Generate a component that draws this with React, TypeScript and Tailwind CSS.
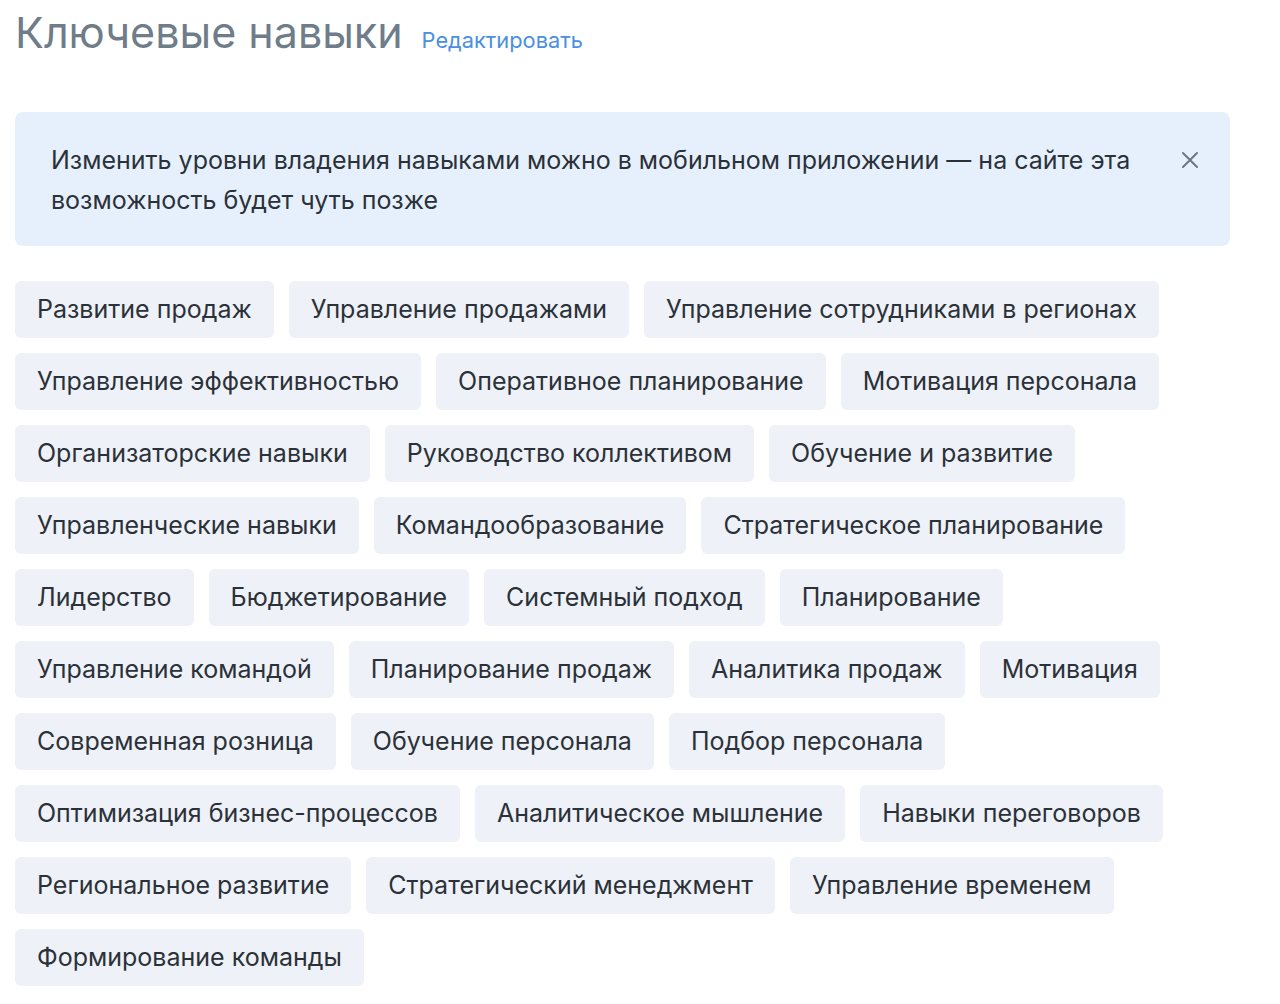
import React from 'react';

const skills = [
  'Развитие продаж',
  'Управление продажами',
  'Управление сотрудниками в регионах',
  'Управление эффективностью',
  'Оперативное планирование',
  'Мотивация персонала',
  'Организаторские навыки',
  'Руководство коллективом',
  'Обучение и развитие',
  'Управленческие навыки',
  'Командообразование',
  'Стратегическое планирование',
  'Лидерство',
  'Бюджетирование',
  'Системный подход',
  'Планирование',
  'Управление командой',
  'Планирование продаж',
  'Аналитика продаж',
  'Мотивация',
  'Современная розница',
  'Обучение персонала',
  'Подбор персонала',
  'Оптимизация бизнес-процессов',
  'Аналитическое мышление',
  'Навыки переговоров',
  'Региональное развитие',
  'Стратегический менеджмент',
  'Управление временем',
  'Формирование команды',
];

export default function App() {
  return (
    <div className="min-h-[1004px] bg-white px-[15px] font-['Inter',sans-serif]">
      <div className="w-[1215px]">
        {/* Header */}
        <div className="flex items-baseline gap-[19px] pt-[6px] h-[112px]">
          <h1 className="text-[43px] leading-[52px] text-[#6f7c89] font-normal">Ключевые навыки</h1>
          <a className="text-[21.8px] text-[#4a8fe2] cursor-pointer">Редактировать</a>
        </div>

        {/* Info banner */}
        <div className="flex items-start justify-between rounded-[8px] bg-[#e6f0fc] pl-[36px] pr-[28px] py-[28px] h-[134px]">
          <p className="text-[25px] leading-[40px] text-[#2b3138] w-[1100px]">
            Изменить уровни владения навыками можно в мобильном приложении — на сайте эта возможность будет чуть позже
          </p>
          <button className="mt-[10px] mr-[2px] text-[#6b7785]">
            <svg width="20" height="20" viewBox="0 0 20 20" fill="none" stroke="currentColor" strokeWidth="2" strokeLinecap="round">
              <path d="M3 3L17 17M17 3L3 17" />
            </svg>
          </button>
        </div>

        {/* Skills */}
        <div className="flex flex-wrap gap-[15px] mt-[35px]">
          {skills.map((s) => (
            <span
              key={s}
              className="flex items-center h-[57px] px-[22px] rounded-[6px] bg-[#eef1f7] text-[25px] text-[#2b3138] whitespace-nowrap"
            >
              {s}
            </span>
          ))}
        </div>
      </div>
    </div>
  );
}
